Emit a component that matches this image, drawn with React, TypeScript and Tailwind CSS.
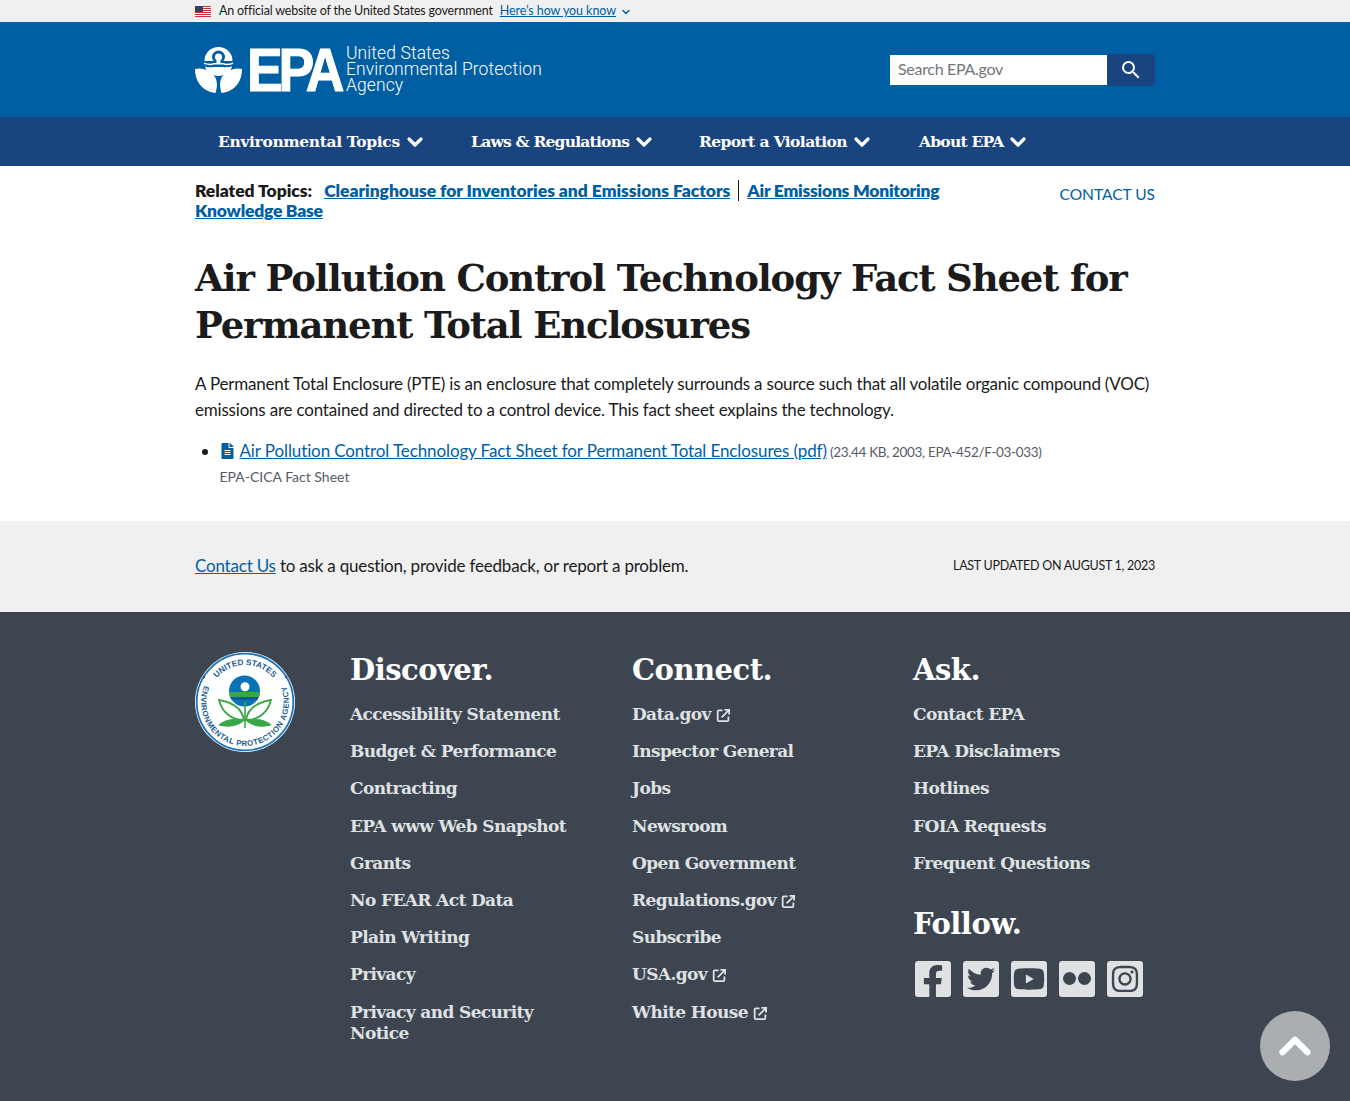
import React from 'react';
import { ChevronDown, ChevronUp } from 'lucide-react';
import { FaFacebookF, FaTwitter, FaYoutube, FaInstagram, FaFileAlt } from 'react-icons/fa';
import { MdSearch } from 'react-icons/md';

const serif = "font-['DejaVu_Serif',serif]";
const heading = `${serif} font-bold text-[29px] leading-[36px] tracking-[-0.5px] text-white`;

function Flag() {
  return (
    <svg width="16" height="11" viewBox="0 0 16 11" className="block">
      <rect width="16" height="11" fill="#fff" />
      {[0, 2, 4, 6, 8, 10].map((y) => (
        <rect key={y} y={y} width="16" height="1" fill="#c8313e" />
      ))}
      <rect width="8" height="6" fill="#3c3b6e" />
    </svg>
  );
}

function Launch() {
  return (
    <svg width="15" height="15" viewBox="0 0 16 16" fill="none" stroke="#dfe1e2" strokeWidth="1.9" className="inline-block ml-[5px] align-[-3px]">
      <path d="M7 2.5H3a1.2 1.2 0 0 0-1.2 1.2v9A1.2 1.2 0 0 0 3 14h9a1.2 1.2 0 0 0 1.2-1.2V9" />
      <path d="M6 10l7.5-7.5M9 2h5v5" />
    </svg>
  );
}

function EpaMark() {
  return (
    <svg width="47" height="47" viewBox="0 0 47 47" className="block shrink-0">
      <path d="M9.500 15A14 14 0 0 1 37.500 15z" fill="#fff" />
      <circle cx="23.500" cy="11" r="6.500" fill="#005ea2" />
      <circle cx="23.500" cy="11" r="3.600" fill="#fff" />
      <rect x="21.500" y="11" width="4" height="7" fill="#fff" />
      <path d="M9 16.500c4 1.500 7 1.500 10 .5h9c3 1 6 1 10-.5l0 1.500c-4 1.500-7 1.500-10 .5h-9c-3 1-6 1-10-.5z" fill="#fff" />
      <path d="M10 20.500c3 1 6 1 9 .5h9c3 .5 6 0 9-.5C36 26 30 30 23.500 30S11 26 10 20.500z" fill="#fff" />
      <path d="M0 23c8-2 16 2 20 8 3 5 2 11 .5 16C10 46 0 38 0 23z" fill="#fff" />
      <path d="M47 23c-8-2-16 2-20 8-3 5-2 11-.5 16C37 46 47 38 47 23z" fill="#fff" />
    </svg>
  );
}

function Seal() {
  return (
    <svg width="100" height="100" viewBox="0 0 100 100" className="block shrink-0">
      <circle cx="50" cy="50" r="50" fill="#fff" />
      <circle cx="50" cy="50" r="48.300" fill="none" stroke="#1b75bb" strokeWidth="1.800" />
      <defs>
        <path id="sealTop" d="M 13 50 A 37 37 0 0 1 87 50" />
        <path id="sealBottom" d="M 11.150 29.350 A 44 44 0 1 0 88.850 29.350" />
        <clipPath id="globe">
          <circle cx="49.500" cy="39" r="15.500" />
        </clipPath>
      </defs>
      <text fontFamily="Liberation Sans" fontSize="8.200" fontWeight="700" fill="#1a5c96" textAnchor="middle">
        <textPath href="#sealTop" startOffset="50%">UNITED STATES</textPath>
      </text>
      <text fontFamily="Liberation Sans" fontSize="7.800" fontWeight="700" letterSpacing="0.500" fill="#1a5c96" textAnchor="middle">
        <textPath href="#sealBottom" startOffset="50%">ENVIRONMENTAL PROTECTION AGENCY</textPath>
      </text>
      <circle cx="9" cy="25" r="1.200" fill="#1a5c96" />
      <circle cx="91" cy="25" r="1.200" fill="#1a5c96" />
      <g clipPath="url(#globe)">
        <rect x="30" y="22" width="40" height="34" fill="#0a73b5" />
        <rect x="30" y="40" width="40" height="5" fill="#3aa648" />
        <rect x="30" y="45" width="40" height="3" fill="#0b5c8f" />
      </g>
      <circle cx="50" cy="34.700" r="4.500" fill="#fff" />
      <path d="M49.200 50h1.600v26h-1.600z" fill="#3aa648" />
      <path d="M49 68C36 68 27 60 24 48c12 2 23 8 25 20z" fill="#fff" stroke="#3aa648" strokeWidth="1.800" />
      <path d="M51 68c13 0 22-8 25-20-12 2-23 8-25 20z" fill="#fff" stroke="#3aa648" strokeWidth="1.800" />
      <path d="M23 73c9-7 19-7 26-4-7 6-17 7-26 4z" fill="#3aa648" />
      <path d="M77 73c-9-7-19-7-26-4 7 6 17 7 26 4z" fill="#3aa648" />
    </svg>
  );
}

function SocialTile({ children }: { children: React.ReactNode }) {
  return (
    <div className="w-9 h-9 rounded-[3px] bg-[#dfe1e2] flex items-center justify-center overflow-hidden text-[#3d4551]">
      {children}
    </div>
  );
}

function FooterLink({ label, ext }: { label: string; ext?: boolean }) {
  return (
    <li className={`${serif} font-bold text-[17px] leading-[21px] tracking-[-0.62px] text-[#dfe1e2] mb-[16.200px]`}>
      {label}
      {ext && <Launch />}
    </li>
  );
}

const navItems = [
  { label: 'Environmental Topics', cls: 'w-[253px] tracking-[-0.35px]' },
  { label: 'Laws & Regulations', cls: 'w-[228px] tracking-[-0.77px]' },
  { label: 'Report a Violation', cls: 'w-[220px] tracking-[-0.6px]' },
  { label: 'About EPA', cls: 'w-[140px] tracking-[-0.77px]' },
];

export default function App() {
  return (
    <div className="min-h-[1101px] flex flex-col bg-white font-['Lato','Noto_Sans',sans-serif] text-[#1b1b1b]">
      {/* Gov banner */}
      <div className="h-[22px] bg-[#f0f0f0] shrink-0">
        <div className="w-[960px] mx-auto h-full flex items-center pt-px text-[12.500px] tracking-[-0.18px]">
          <Flag />
          <span className="ml-2">An official website of the United States government</span>
          <span className="ml-[7px] text-[#005ea2] underline tracking-[-0.08px]">Here’s how you know</span>
          <ChevronDown className="ml-[4px] w-3 h-3 text-[#005ea2]" strokeWidth={3} />
        </div>
      </div>

      {/* Header */}
      <header className="h-[95px] bg-[#005ea2] shrink-0">
        <div className="w-[960px] mx-auto h-full flex items-center justify-between">
          <div className="flex items-center">
            <EpaMark />
            <div className="w-[99px] ml-[5px] h-[46px]">
              <span className="block font-['Liberation_Sans',sans-serif] font-bold text-white text-[61px] leading-[46px] tracking-[-5px] scale-x-[0.88] origin-left [-webkit-text-stroke:1px_white]">EPA</span>
            </div>
            <div className="font-['Roboto',sans-serif] font-light text-white text-[17.500px] leading-[16px] tracking-[0.1px] mb-[1px]">
              United States<br />Environmental Protection<br />Agency
            </div>
          </div>
          <div className="flex items-center">
            <div className="w-[217px] h-[30px] bg-white flex items-center pl-2 pb-px text-[16px] tracking-[-0.3px] text-[#71767a]">Search EPA.gov</div>
            <div className="w-[48px] h-[32px] bg-[#1a4480] rounded-r-[4px] flex items-center justify-center">
              <MdSearch className="w-6 h-6 text-white" />
            </div>
          </div>
        </div>
      </header>

      {/* Nav */}
      <nav className="h-[49px] bg-[#1a4480] shrink-0">
        <div className="w-[960px] mx-auto h-full flex items-center pl-[23px]">
          {navItems.map((item) => (
            <div key={item.label} className={`${item.cls} flex items-center ${serif} font-bold text-white text-[15.500px]`}>
              {item.label}
              <ChevronDown className="ml-[3px] w-6 h-6" strokeWidth={3.200} />
            </div>
          ))}
        </div>
      </nav>

      {/* Main */}
      <main className="w-[960px] mx-auto pt-[15px] pb-[32px]">
        <div className="flex justify-between items-start">
          <div className="w-[780px] font-extrabold text-[17.500px] leading-[20px] tracking-[-0.05px]">
            <span className="mr-3">Related Topics:</span>
            <a className="text-[#005ea2] underline">Clearinghouse for Inventories and Emissions Factors</a>
            <span className="border-l border-[#1b1b1b] ml-2 pl-2 text-[#005ea2] underline tracking-[-0.25px]">Air Emissions Monitoring Knowledge Base</span>
          </div>
          <span className="mt-[3px] text-[#005ea2] text-[15.500px] leading-[20px]">CONTACT US</span>
        </div>

        <h1 className={`${serif} font-bold text-[37px] leading-[47px] tracking-[-1.13px] mt-[34px]`}>
          Air Pollution Control Technology Fact Sheet for Permanent Total Enclosures
        </h1>

        <p className="mt-[22px] text-[17px] leading-[26px] tracking-[-0.2px]">
          A Permanent Total Enclosure (PTE) is an enclosure that completely surrounds a source such that all volatile organic compound (VOC) emissions are contained and directed to a control device. This fact sheet explains the technology.
        </p>

        <ul className="mt-[15px] ml-[24.500px] list-disc marker:text-[#1b1b1b]">
          <li className="text-[17px] leading-[26px]">
            <a className="text-[#005ea2] underline tracking-[-0.11px]">
              <FaFileAlt className="inline-block w-[15px] h-[16px] mr-[5px] align-[-2px]" />
              Air Pollution Control Technology Fact Sheet for Permanent Total Enclosures (pdf)
            </a>
            <span className="ml-[3px] text-[13.500px] tracking-[-0.33px] text-[#565c65]">(23.44 KB, 2003, EPA-452/F-03-033)</span>
            <div className="text-[14px] text-[#565c65] leading-[24px]">EPA-CICA Fact Sheet</div>
          </li>
        </ul>
      </main>

      {/* Contact strip */}
      <div className="h-[91px] bg-[#f0f0f0] shrink-0">
        <div className="w-[960px] mx-auto h-full flex items-center justify-between">
          <p className="text-[17px] tracking-[-0.2px] mb-[2px]">
            <a className="text-[#005ea2] underline">Contact Us</a> to ask a question, provide feedback, or report a problem.
          </p>
          <span className="text-[12.500px] tracking-[-0.27px]">LAST UPDATED ON AUGUST 1, 2023</span>
        </div>
      </div>

      {/* Footer */}
      <footer className="flex-1 bg-[#3d4551] text-[#dfe1e2]">
        <div className="w-[960px] mx-auto pt-[40px] pb-[40px] flex">
          <div className="w-[155px] shrink-0">
            <Seal />
          </div>
          <div className="w-[282px] shrink-0">
            <h2 className={`${heading} mb-[16px]`}>Discover.</h2>
            <ul className="w-[235px]">
              {['Accessibility Statement', 'Budget & Performance', 'Contracting', 'EPA www Web Snapshot', 'Grants', 'No FEAR Act Data', 'Plain Writing', 'Privacy', 'Privacy and Security Notice'].map((l) => (
                <FooterLink key={l} label={l} />
              ))}
            </ul>
          </div>
          <div className="w-[281px] shrink-0">
            <h2 className={`${heading} mb-[16px]`}>Connect.</h2>
            <ul>
              <FooterLink label="Data.gov" ext />
              <FooterLink label="Inspector General" />
              <FooterLink label="Jobs" />
              <FooterLink label="Newsroom" />
              <FooterLink label="Open Government" />
              <FooterLink label="Regulations.gov" ext />
              <FooterLink label="Subscribe" />
              <FooterLink label="USA.gov" ext />
              <FooterLink label="White House" ext />
            </ul>
          </div>
          <div className="flex-1">
            <h2 className={`${heading} mb-[16px]`}>Ask.</h2>
            <ul>
              {['Contact EPA', 'EPA Disclaimers', 'Hotlines', 'FOIA Requests', 'Frequent Questions'].map((l) => (
                <FooterLink key={l} label={l} />
              ))}
            </ul>
            <h2 className={`${heading} mt-[32px] mb-[19px]`}>Follow.</h2>
            <div className="flex gap-3 pl-[2px]">
              <SocialTile><FaFacebookF className="w-[26px] h-[34px] mt-[6px]" /></SocialTile>
              <SocialTile><FaTwitter className="w-7 h-7" /></SocialTile>
              <SocialTile><FaYoutube className="w-[32px] h-[32px]" /></SocialTile>
              <SocialTile>
                <div className="flex gap-[2px]">
                  <span className="w-[13px] h-[13px] rounded-full bg-[#3d4551]" />
                  <span className="w-[13px] h-[13px] rounded-full bg-[#3d4551]" />
                </div>
              </SocialTile>
              <SocialTile><FaInstagram className="w-[30px] h-[30px]" /></SocialTile>
            </div>
          </div>
        </div>
      </footer>

      {/* Back to top */}
      <div className="fixed right-[20px] bottom-[20px] w-[70px] h-[70px] rounded-full bg-[#a9aeb1] flex items-center justify-center">
        <ChevronUp className="w-[50px] h-[50px] text-white" strokeWidth={3} />
      </div>
    </div>
  );
}
